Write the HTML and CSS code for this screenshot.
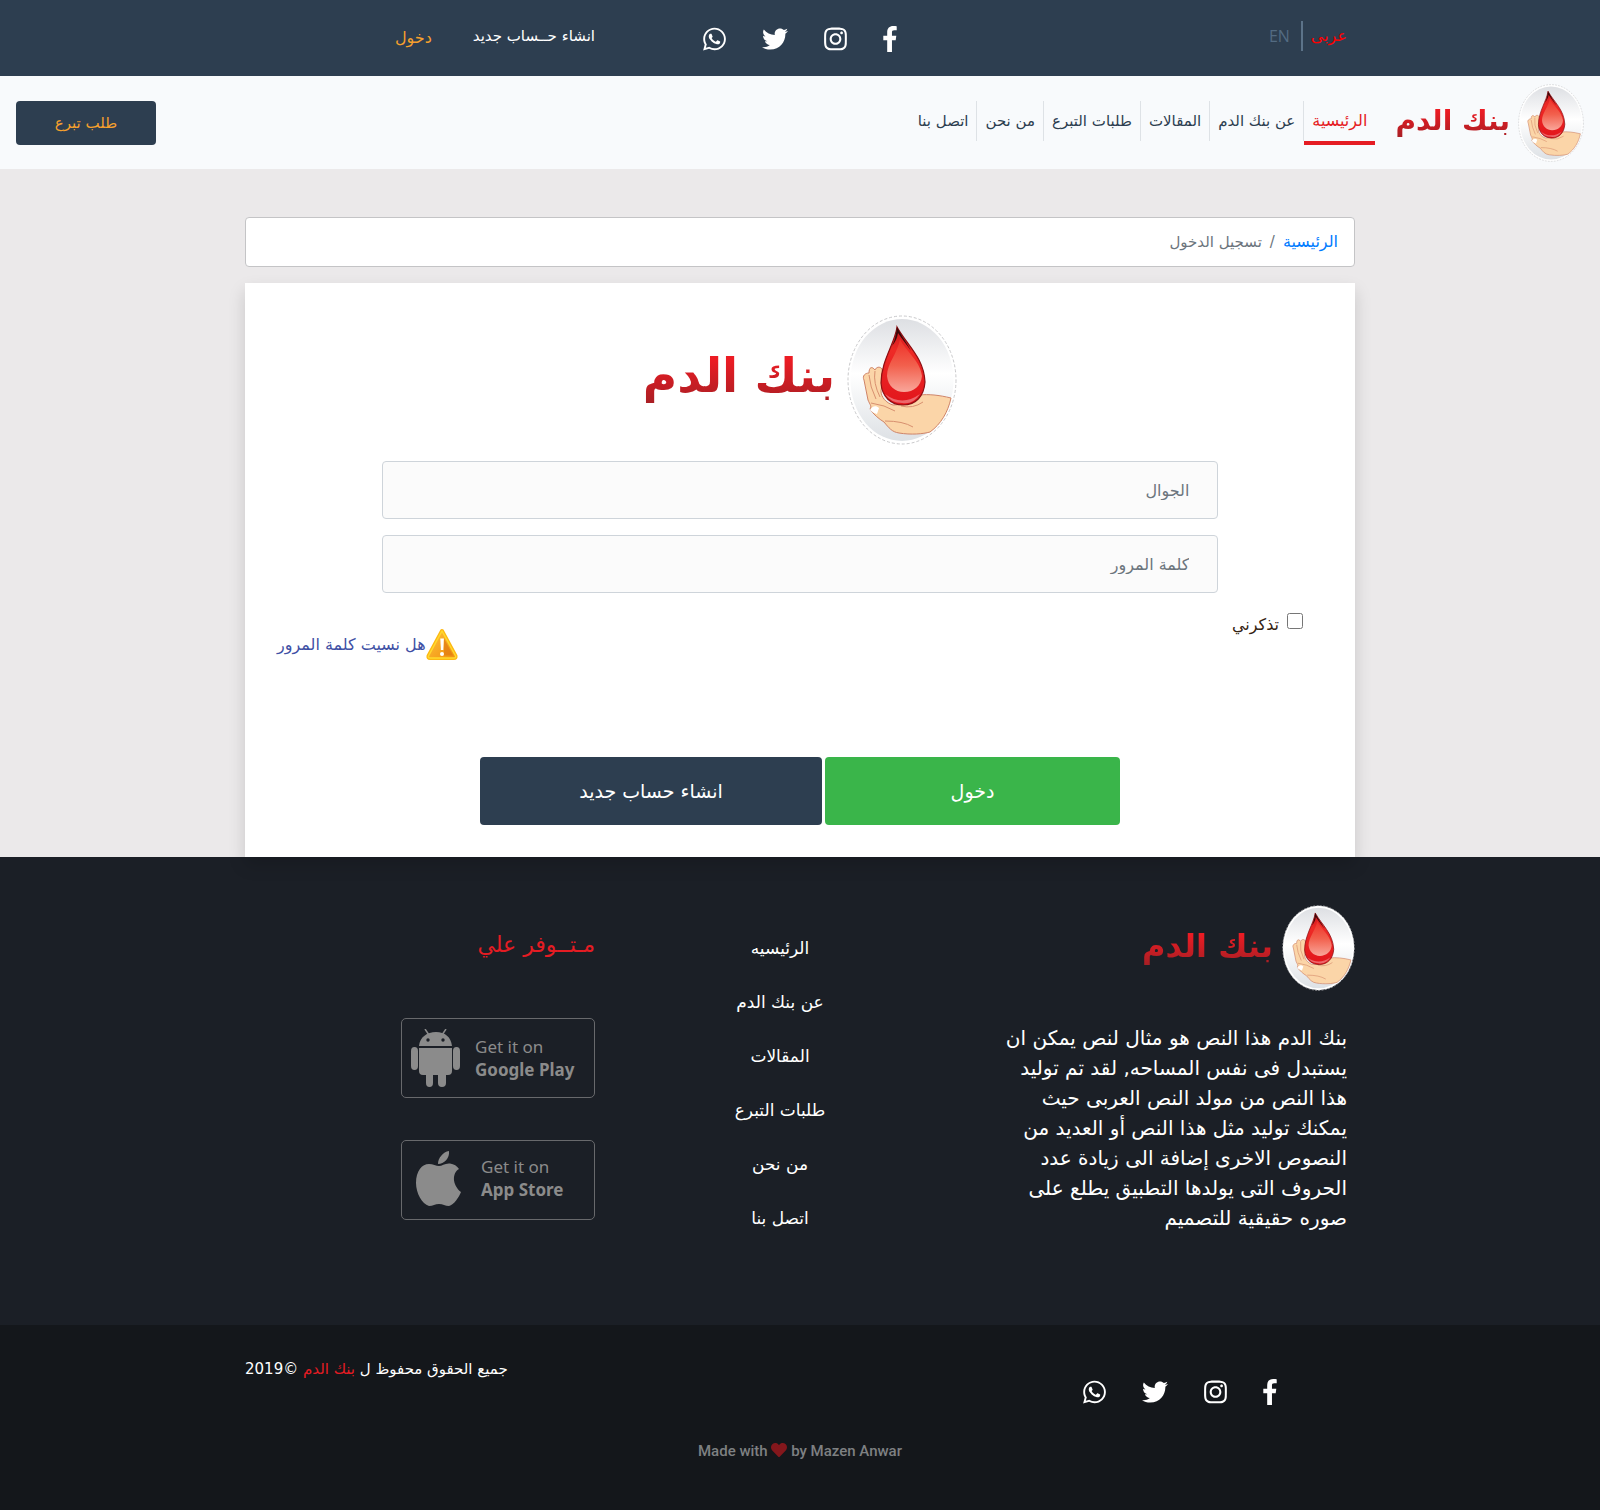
FILE: index.html
```html
<!DOCTYPE html>
<html lang="ar" dir="rtl">
<head>
<meta charset="utf-8">
<meta name="viewport" content="width=device-width, initial-scale=1">
<title>بنك الدم</title>
<link rel="stylesheet" href="styles.css">
</head>
<body>
<svg class="sprite" aria-hidden="true">
  <defs>
    <linearGradient id="disc" x1="0" y1="0" x2="0" y2="1"><stop offset="0" stop-color="#dddfe3"/><stop offset=".45" stop-color="#ffffff"/><stop offset="1" stop-color="#dde1e5"/></linearGradient>
    <linearGradient id="drop" x1="0" y1="0" x2="0" y2="1"><stop offset="0" stop-color="#c8141b"/><stop offset=".3" stop-color="#ee2a26"/><stop offset="1" stop-color="#e2151c"/></linearGradient>
    <linearGradient id="shine" x1="0" y1="0" x2="0" y2="1"><stop offset="0" stop-color="#ee2f27"/><stop offset=".5" stop-color="#f2604d"/><stop offset="1" stop-color="#f9a69a"/></linearGradient>
    <linearGradient id="amber" x1="0" y1="0" x2="1" y2="1"><stop offset="0" stop-color="#ffc23a"/><stop offset="1" stop-color="#f0900f"/></linearGradient>
  </defs>
  <symbol id="emblem" viewBox="204 0 110 130">
    <ellipse cx="259" cy="65" rx="54" ry="64" fill="#fff" stroke="#c9c9cb" stroke-width="1" stroke-dasharray="3 2"/>
    <ellipse cx="259" cy="65" rx="51.500" ry="61" fill="url(#disc)"/>
    <path d="M308 83C296 80 285 79 277 80C270 84 262 90 250 90C243 88 238 82 238 76C240 66 240 60 239 54C237 51 233 52 232 55C229 51 226 52 226 58C222 58 219 61 221 65L225 85C227 90 229 91 227 94C230 99 236 104 241 107C246 113 249 117 256 118C268 120 280 119 287 117C298 109 305 97 308 83Z" fill="#fbd5a8" stroke="#cf8468" stroke-width="1"/>
    <path d="M232 56Q230 68 237 82M226 60Q227 72 233 84M228 88Q242 90 252 96M242 106Q260 106 270 112M258 91Q270 94 280 87" fill="none" stroke="#d8906f" stroke-width="1"/>
    <path d="M227 95C229 91 233 90 236 93L234 99C231 98 229 97 227 95Z" fill="#fff"/>
    <path d="M254 12C252 28 238 46 238 68C239 82 248 90 260 90C273 90 281 81 282 67C281 43 264 30 254 12Z" fill="url(#drop)" stroke="#8d0f13" stroke-width="1.200"/>
    <path d="M254 12C253 20 252 25 249 31C252 27 254 24 255 18C259 24 264 30 268 36C264 28 259 22 254 12Z" fill="#3a0809"/>
    <path d="M257 24C255 38 244 48 244 61C245 71 252 77 261 77C271 77 278 71 279 61C277 45 263 37 257 24Z" fill="url(#shine)"/>
    <path d="M242 79Q259 92 277 79Q270 90 259 88Q248 88 242 79Z" fill="#fff" opacity=".35"/>
  </symbol>
  <symbol id="fb" viewBox="0 0 264 512"><path d="M76.700 512V283H0v-91h76.700v-71.700C76.700 42.400 124.300 0 193.800 0c33.300 0 61.900 2.500 70.200 3.600V85h-48.200c-37.800 0-45.100 18-45.100 44.300V192H256l-11.700 91h-73.600v229"/></symbol>
  <symbol id="ig" viewBox="0 0 448 512"><path d="M224.100 141c-63.600 0-114.900 51.300-114.900 114.900s51.300 114.900 114.900 114.900S339 319.500 339 255.900 287.700 141 224.100 141zm0 189.600c-41.100 0-74.700-33.500-74.700-74.700s33.500-74.700 74.700-74.700 74.700 33.500 74.700 74.700-33.600 74.700-74.700 74.700zm146.400-194.300c0 14.900-12 26.800-26.800 26.800-14.900 0-26.800-12-26.800-26.800s12-26.800 26.800-26.800 26.800 12 26.800 26.800zm76.100 27.200c-1.700-35.900-9.900-67.700-36.200-93.900-26.200-26.200-58-34.400-93.900-36.200-37-2.100-147.900-2.100-184.900 0-35.800 1.700-67.600 9.900-93.900 36.100s-34.400 58-36.200 93.900c-2.100 37-2.100 147.900 0 184.900 1.700 35.900 9.900 67.700 36.200 93.900s58 34.400 93.900 36.200c37 2.100 147.900 2.100 184.900 0 35.900-1.700 67.700-9.900 93.900-36.200 26.200-26.200 34.400-58 36.200-93.900 2.100-37 2.100-147.800 0-184.800zM398.800 388c-7.800 19.600-22.900 34.700-42.600 42.600-29.500 11.700-99.500 9-132.100 9s-102.700 2.600-132.100-9c-19.600-7.800-34.700-22.900-42.600-42.600-11.700-29.500-9-99.500-9-132.100s-2.600-102.700 9-132.100c7.800-19.600 22.900-34.700 42.600-42.600 29.500-11.700 99.500-9 132.100-9s102.700-2.600 132.100 9c19.600 7.800 34.700 22.900 42.600 42.600 11.700 29.500 9 99.500 9 132.100s2.700 102.700-9 132.100z"/></symbol>
  <symbol id="tw" viewBox="0 0 512 512"><path d="M459.370 151.716c.325 4.548.325 9.097.325 13.645 0 138.720-105.583 298.558-298.558 298.558-59.452 0-114.680-17.219-161.137-47.106 8.447.974 16.568 1.299 25.340 1.299 49.055 0 94.213-16.568 130.274-44.832-46.132-.975-84.792-31.188-98.112-72.772 6.498.974 12.995 1.624 19.818 1.624 9.421 0 18.843-1.300 27.614-3.573-48.081-9.747-84.143-51.980-84.143-102.985v-1.299c13.969 7.797 30.214 12.670 47.431 13.319-28.264-18.843-46.781-51.005-46.781-87.391 0-19.492 5.197-37.360 14.294-52.954 51.655 63.675 129.300 105.258 216.365 109.807-1.624-7.797-2.599-15.918-2.599-24.040 0-57.828 46.782-104.934 104.934-104.934 30.213 0 57.502 12.670 76.670 33.137 23.715-4.548 46.456-13.320 66.599-25.340-7.798 24.366-24.366 44.833-46.132 57.827 21.117-2.273 41.584-8.122 60.426-16.243-14.292 20.791-32.161 39.308-52.628 54.253z"/></symbol>
  <symbol id="wa" viewBox="0 0 448 512"><path d="M380.900 97.100C339 55.100 283.200 32 223.900 32c-122.400 0-222 99.600-222 222 0 39.100 10.200 77.300 29.600 111L0 480l117.700-30.900c32.400 17.700 68.900 27 106.100 27h.1c122.300 0 224.100-99.600 224.100-222 0-59.300-25.200-115-67.100-157zm-157 341.600c-33.200 0-65.700-8.900-94-25.700l-6.700-4-69.800 18.300L72 359.200l-4.400-7c-18.500-29.400-28.200-63.300-28.200-98.200 0-101.700 82.800-184.500 184.600-184.500 49.300 0 95.600 19.200 130.400 54.100 34.800 34.900 56.200 81.200 56.100 130.500 0 101.800-84.900 184.600-186.600 184.600zm101.200-138.200c-5.500-2.800-32.800-16.200-37.900-18-5.100-1.900-8.800-2.800-12.500 2.800-3.700 5.600-14.300 18-17.600 21.800-3.200 3.700-6.500 4.200-12 1.400-32.600-16.300-54-29.100-75.500-66-5.700-9.800 5.700-9.100 16.300-30.300 1.800-3.700.9-6.900-.5-9.700-1.400-2.800-12.500-30.100-17.100-41.200-4.500-10.800-9.100-9.300-12.500-9.500-3.200-.2-6.900-.2-10.600-.2-3.700 0-9.700 1.400-14.800 6.900-5.100 5.600-19.400 19-19.400 46.300 0 27.300 19.900 53.700 22.600 57.400 2.800 3.700 39.100 59.700 94.800 83.800 35.200 15.200 49 16.500 66.600 13.900 10.700-1.600 32.800-13.400 37.400-26.400 4.600-13 4.600-24.100 3.200-26.400-1.300-2.500-5-3.900-10.500-6.600z"/></symbol>
</svg>

<header>
  <div class="topbar">
    <div class="container row">
      <div class="col langs">
        <a class="lang-ar" href="#">عربى</a>
        <a class="lang-en" href="#">EN</a>
      </div>
      <div class="col social">
        <a href="#" aria-label="Facebook"><svg class="fb"><use href="#fb"/></svg></a>
        <a href="#" aria-label="Instagram"><svg class="ig"><use href="#ig"/></svg></a>
        <a href="#" aria-label="Twitter"><svg class="tw"><use href="#tw"/></svg></a>
        <a href="#" aria-label="WhatsApp"><svg class="ig"><use href="#wa"/></svg></a>
      </div>
      <div class="col account">
        <a class="signup" href="#">انشاء حــساب جديد</a>
        <a class="signin" href="#">دخول</a>
      </div>
    </div>
  </div>
  <nav class="navbar">
    <a class="logo logo-small" href="#"><svg><use href="#emblem"/></svg><span>بنك الدم</span></a>
    <ul class="menu">
      <li><a class="active" href="#">الرئيسية</a></li>
      <li><a href="#">عن بنك الدم</a></li>
      <li><a href="#">المقالات</a></li>
      <li><a href="#">طلبات التبرع</a></li>
      <li><a href="#">من نحن</a></li>
      <li><a href="#">اتصل بنا</a></li>
    </ul>
    <button class="donate" type="button">طلب تبرع</button>
  </nav>
</header>

<main>
  <div class="container">
    <ol class="breadcrumb">
      <li><a href="#">الرئيسية</a></li>
      <li>تسجيل الدخول</li>
    </ol>
    <form class="card">
      <div class="logo logo-large"><svg><use href="#emblem"/></svg><span>بنك الدم</span></div>
      <input class="field" type="text" placeholder="الجوال" aria-label="الجوال">
      <input class="field" type="password" placeholder="كلمة المرور" aria-label="كلمة المرور">
      <div class="options">
        <div class="remember">
          <input type="checkbox" id="remember">
          <label for="remember">تذكرني</label>
        </div>
        <a class="forgot" href="#">
          <svg viewBox="0 0 32 32"><path d="M16 2.500L29.500 27.500Q30 29.500 28 29.500H4Q2 29.500 2.500 27.500Z" fill="url(#amber)" stroke="#fdb813" stroke-width="4" stroke-linejoin="round"/><path d="M16 2.500L29.500 27.500Q30 29.500 28 29.500H4Q2 29.500 2.500 27.500Z" fill="url(#amber)" stroke="#ffd92e" stroke-width="1.500" stroke-linejoin="round"/><path d="M18 10L27 27H18Z" fill="#dd7412" opacity=".6"/><path d="M14.300 10h3.600l-.6 11.500h-2.400z" fill="#fff"/><circle cx="16" cy="25.500" r="2" fill="#fff"/></svg>هل نسيت كلمة المرور</a>
      </div>
      <div class="actions">
        <button class="enter" type="submit">دخول</button>
        <button class="create" type="button">انشاء حساب جديد</button>
      </div>
    </form>
  </div>
</main>

<footer>
  <div class="footer-main">
    <div class="container row">
      <div class="col about">
        <div class="logo logo-medium"><svg><use href="#emblem"/></svg><span>بنك الدم</span></div>
        <p>بنك الدم هذا النص هو مثال لنص يمكن ان<br>يستبدل فى نفس المساحه, لقد تم توليد<br>هذا النص من مولد النص العربى حيث<br>يمكنك توليد مثل هذا النص أو العديد من<br>النصوص الاخرى إضافة الى زيادة عدد<br>الحروف التى يولدها التطبيق يطلع على<br>صوره حقيقية للتصميم</p>
      </div>
      <ul class="col links">
        <li><a href="#">الرئيسيه</a></li>
        <li><a href="#">عن بنك الدم</a></li>
        <li><a href="#">المقالات</a></li>
        <li><a href="#">طلبات التبرع</a></li>
        <li><a href="#">من نحن</a></li>
        <li><a href="#">اتصل بنا</a></li>
      </ul>
      <div class="col apps">
        <h2>مـتــوفر علي</h2>
        <a class="store google" href="#" dir="ltr">
          <svg viewBox="0 0 50 58"><path d="M8 17C9 8 16 3 25 3S40 8 41 17ZM8 19H41V42Q41 46 37 46H35V54Q35 58 31 58T27 54V46H22V54Q22 58 18.500 58T15 54V46H12Q8 46 8 42ZM0 22Q0 18 3.500 18T7 22V37Q7 41 3.500 41T0 37ZM42 22Q42 18 45.500 18T49 22V37Q49 41 45.500 41T42 37Z" fill="#8b8b8b"/><path d="M14 0l4 6M35 0l-4 6" stroke="#8b8b8b" stroke-width="1.500"/><circle cx="17" cy="11" r="1.700" fill="#1b1f26"/><circle cx="32" cy="11" r="1.700" fill="#1b1f26"/></svg>
          <span>Get it on<b>Google Play</b></span>
        </a>
        <a class="store apple" href="#" dir="ltr">
          <svg viewBox="0 0 45 55"><path d="M33 0C34 7 28 13 22 13C22 7 27 1 33 0ZM43 18C36 22 36 34 45 41C43 46 38 54 33 55C29 55 27 53 23 53C19 53 17 55 13 55C6 53 0 42 0 32C0 20 6 13 13 13C17 13 20 15 23 15C26 15 29 12 34 12.500C38 13 41 15 43 18Z" fill="#8b8b8b"/></svg>
          <span>Get it on<b>App Store</b></span>
        </a>
      </div>
    </div>
  </div>
  <div class="footer-bottom">
    <div class="container row">
      <div class="col social">
        <a href="#" aria-label="Facebook"><svg class="fb"><use href="#fb"/></svg></a>
        <a href="#" aria-label="Instagram"><svg class="ig"><use href="#ig"/></svg></a>
        <a href="#" aria-label="Twitter"><svg class="tw"><use href="#tw"/></svg></a>
        <a href="#" aria-label="WhatsApp"><svg class="ig"><use href="#wa"/></svg></a>
      </div>
      <p class="rights">جميع الحقوق محفوظ ل <span>بنك الدم</span> ©2019</p>
    </div>
    <p class="credit" dir="ltr">Made with <svg viewBox="0 0 512 512"><path d="M462.300 62.600C407.500 15.900 326 24.300 275.700 76.200L256 96.500l-19.700-20.300C186.100 24.300 104.500 15.900 49.700 62.600c-62.800 53.600-66.100 149.800-9.900 207.900l193.500 199.800c12.500 12.900 32.800 12.900 45.300 0l193.500-199.800c56.300-58.100 53-154.300-9.800-207.900z"/></svg> by Mazen Anwar</p>
  </div>
</footer>
</body>
</html>
```
FILE: styles.css
```css
* { box-sizing: border-box; }

body {
  margin: 0;
  background: #ebe9ea;
  color: #212529;
  font-family: "DejaVu Sans", sans-serif;
  font-size: 16px;
  line-height: 24px;
}

a { color: inherit; text-decoration: none; }
ul, ol { margin: 0; padding: 0; list-style: none; }
p, h2 { margin: 0; }
button { border: 0; border-radius: 4px; font-family: inherit; cursor: pointer; }
.sprite { position: absolute; width: 0; height: 0; }

.container { width: 100%; max-width: 1140px; margin: 0 auto; padding: 0 15px; }
.row { display: grid; grid-template-columns: repeat(3, minmax(0, 1fr)); column-gap: 30px; }

.logo { display: flex; align-items: center; white-space: nowrap; }
.logo span {
  background: linear-gradient(#ec1c24 30%, #9e1f24 80%);
  background-clip: text;
  -webkit-background-clip: text;
  color: transparent;
  font-weight: bold;
  line-height: 2;
}
.logo-small { gap: 8px; font-size: 28px; }
.logo-small svg { width: 66px; height: 78px; }
.logo-small span { padding-bottom: 4px; }
.logo-medium { gap: 9px; font-size: 32px; }
.logo-medium svg { width: 73px; height: 86px; }
.logo-medium span { padding-bottom: 4px; }
.logo-large { gap: 12px; margin-bottom: 16px; font-size: 47px; }
.logo-large svg { width: 110px; height: 130px; }
.logo-large span { padding-bottom: 8px; }

.topbar { height: 76px; background: #2d3e50; color: #fff; }
.langs { display: flex; align-items: flex-start; padding: 21px 8px; line-height: 30px; }
.lang-ar { padding-left: 8px; border-left: 2px solid #5c7389; color: #f00; }
.lang-en { padding-right: 11px; color: #536b82; font-family: "Open Sans", sans-serif; }

.social { display: flex; justify-content: center; gap: 36px; padding-top: 26px; color: #fff; }
.social svg { display: block; height: 26px; fill: currentColor; }
.fb { width: 14px; }
.ig { width: 23px; }
.tw { width: 26px; }

.account { display: flex; gap: 41px; padding-top: 24px; white-space: nowrap; }
.signup { font-size: 15px; }
.signin { padding-top: 2px; color: #f6a02d; }

.navbar { display: flex; align-items: center; height: 93px; padding: 0 16px; background: #f8fafc; color: #2d3e50; }
.menu { display: flex; align-self: flex-start; margin: 25px 20px 0 auto; font-size: 15px; white-space: nowrap; }
.menu a { display: block; height: 40px; padding: 8px; }
.menu li + li a { border-right: 1px solid #dee2e6; }
.menu .active { height: 44px; border-bottom: 4px solid #e51c23; color: #e51c23; font-size: 16px; }
.donate { width: 140px; height: 44px; background: #2d3e50; color: #f6a02d; font-size: 15px; }

main { padding-top: 48px; }
.breadcrumb { display: flex; height: 50px; margin-bottom: 16px; padding: 12px 16px; border: 1px solid #c4c4c6; border-radius: 4px; background: #fff; color: #6c757d; font-size: 15px; }
.breadcrumb a { color: #007bff; font-size: 16px; }
.breadcrumb li + li::before { content: "/"; padding: 0 8px; }

.card { position: relative; display: flex; flex-direction: column; align-items: center; padding: 32px; background: #fff; box-shadow: 0 8px 16px rgba(0, 0, 0, .15); }
.field { width: 80%; height: 58px; margin-bottom: 16px; padding: 0 28px; border: 1px solid #ced4da; border-radius: 4px; background: #fbfbfb; font-family: inherit; font-size: 16px; }
.field::placeholder { color: #6c757d; opacity: 1; }
.options { display: flex; justify-content: space-between; width: 100%; height: 148px; padding-right: 20px; }
.remember { display: flex; align-items: flex-start; gap: 8px; color: #321; }
.remember input { width: 16px; height: 16px; margin: 4px 0 0; }
.remember label { padding-top: 4px; }
.forgot { display: flex; align-items: center; align-self: flex-start; padding-top: 19px; color: #3f51a5; }
.forgot svg { width: 32px; height: 33px; }
.actions { display: flex; justify-content: center; gap: 3px; width: 100%; }
.actions button { height: 68px; color: #fff; font-size: 19px; }
.enter { width: 295px; background: #3ab54a; }
.create { width: 342px; background: #2d3e50; }

footer { color: #fff; }
.footer-main { height: 468px; padding-top: 48px; background: #1b1f26; }
.about p { padding: 32px 8px 0; font-size: 20px; line-height: 30px; white-space: nowrap; }
.links { display: grid; grid-auto-rows: 24px; row-gap: 30px; align-content: start; justify-items: center; padding: 31px 40px 0 0; font-size: 17px; }
.apps { padding-top: 24px; }
.apps h2 { color: #e51c23; font-size: 22px; font-weight: normal; line-height: 32px; }
.store { display: flex; align-items: center; gap: 14px; width: 194px; height: 80px; margin-top: 42px; border: 1px solid #68696c; border-radius: 5px; color: #8b8b8b; font-family: "Noto Sans", sans-serif; font-size: 17px; line-height: 23px; }
.apps h2 + .store { margin-top: 57px; }
.store b { display: block; }
.google { padding-left: 9px; }
.google svg { width: 50px; height: 58px; }
.apple { gap: 20px; padding: 0 0 4px 14px; }
.apple svg { width: 45px; height: 55px; }

.footer-bottom { height: 185px; background: #14171b; }
.footer-bottom .social { padding-top: 54px; }
.rights { grid-column: 3; padding-top: 32px; font-size: 15px; text-align: left; white-space: nowrap; }
.rights span { color: #e51c23; }
.credit { padding-top: 34px; color: #7e8082; font-family: Roboto, sans-serif; font-size: 15px; font-weight: 500; text-align: center; }
.credit svg { width: 16px; height: 16px; vertical-align: -2px; fill: #84171c; }
```
